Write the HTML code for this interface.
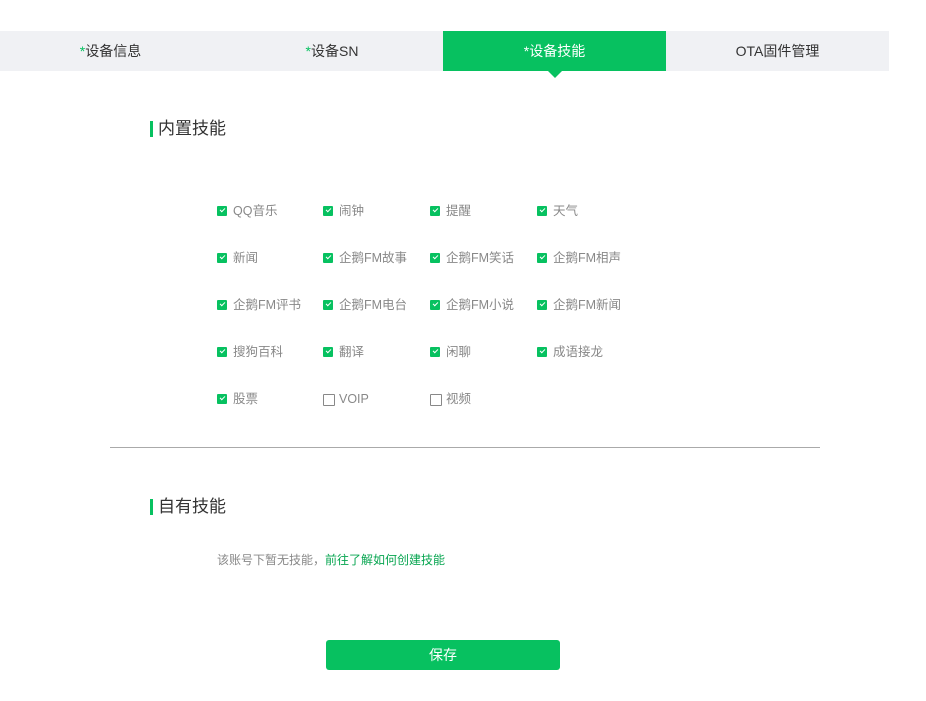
<!DOCTYPE html>
<html><head><meta charset="utf-8"><style>
*{margin:0;padding:0;box-sizing:border-box}
body{width:926px;height:701px;background:#fff;font-family:"Liberation Sans","Noto Sans CJK SC",sans-serif;position:relative;overflow:hidden}
.tabs{position:absolute;left:0;top:31px;width:889px;height:40px;background:#f0f1f4;display:flex}
.tab{line-height:40px;text-align:center;font-size:14px;color:#333;position:relative}
.tab .s{color:#07c160}
.tab.on{background:#07c160;color:#fff}
.tab.on .s{color:#fff}
.tab.on:after{content:"";position:absolute;left:50%;margin-left:-7px;bottom:-7px;border-left:7px solid transparent;border-right:7px solid transparent;border-top:7px solid #07c160}
.h{position:absolute;left:150px;font-size:17px;color:#333;line-height:20px;padding-left:8px}
.h:before{content:"";position:absolute;left:0;top:2px;width:3px;height:16px;background:#07c160}
.cb{position:absolute;font-size:12.5px;color:#888;line-height:14px;padding-left:16px;white-space:nowrap}
.cb:before{content:"";position:absolute;left:0;top:2px;width:10px;height:10px;border-radius:1px;background:#07c160}
.cb:after{content:"";position:absolute;left:3px;top:4px;width:4px;height:2px;border-left:1px solid #fff;border-bottom:1px solid #fff;transform:rotate(-45deg)}
.cb.off:before{background:#fff;border:1px solid #888}
.cb.off:after{display:none}
.line{position:absolute;left:110px;top:447px;width:710px;height:1px;background:#aaa}
.txt{position:absolute;left:217px;top:551px;font-size:12px;color:#888}
.txt span{color:#07a550}
.btn{position:absolute;left:326px;top:640px;width:234px;height:30px;background:#07c160;border-radius:3px;color:#fff;text-align:center;line-height:30px;font-size:14px}
</style></head><body>
<div class="tabs">
<div class="tab" style="width:221px"><span class="s">*</span>设备信息</div>
<div class="tab" style="width:222px"><span class="s">*</span>设备SN</div>
<div class="tab on" style="width:223px"><span class="s">*</span>设备技能</div>
<div class="tab" style="width:223px">OTA固件管理</div>
</div>
<div class="h" style="top:119px">内置技能</div>
<div class="cb" style="left:217px;top:204px">QQ音乐</div>
<div class="cb" style="left:323px;top:204px">闹钟</div>
<div class="cb" style="left:430px;top:204px">提醒</div>
<div class="cb" style="left:537px;top:204px">天气</div>
<div class="cb" style="left:217px;top:251px">新闻</div>
<div class="cb" style="left:323px;top:251px">企鹅FM故事</div>
<div class="cb" style="left:430px;top:251px">企鹅FM笑话</div>
<div class="cb" style="left:537px;top:251px">企鹅FM相声</div>
<div class="cb" style="left:217px;top:298px">企鹅FM评书</div>
<div class="cb" style="left:323px;top:298px">企鹅FM电台</div>
<div class="cb" style="left:430px;top:298px">企鹅FM小说</div>
<div class="cb" style="left:537px;top:298px">企鹅FM新闻</div>
<div class="cb" style="left:217px;top:345px">搜狗百科</div>
<div class="cb" style="left:323px;top:345px">翻译</div>
<div class="cb" style="left:430px;top:345px">闲聊</div>
<div class="cb" style="left:537px;top:345px">成语接龙</div>
<div class="cb" style="left:217px;top:392px">股票</div>
<div class="cb off" style="left:323px;top:392px">VOIP</div>
<div class="cb off" style="left:430px;top:392px">视频</div>
<div class="line"></div>
<div class="h" style="top:497px">自有技能</div>
<div class="txt">该账号下暂无技能，<span>前往了解如何创建技能</span></div>
<div class="btn">保存</div>
</body></html>
